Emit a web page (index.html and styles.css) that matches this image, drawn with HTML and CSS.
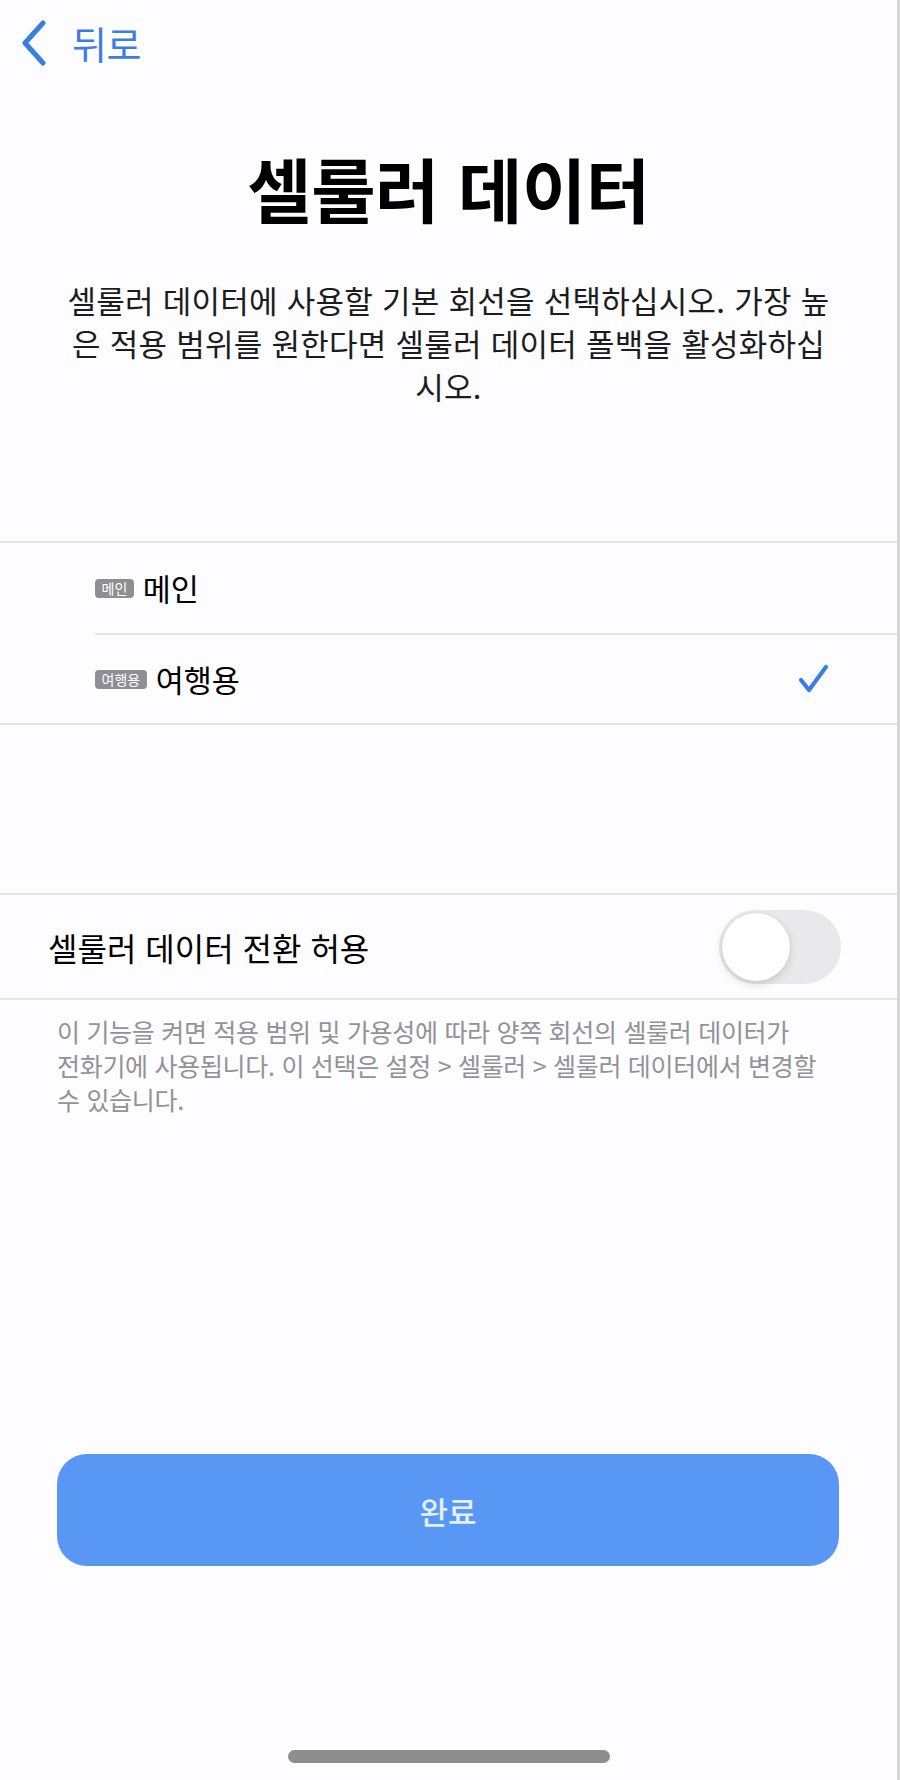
FILE: index.html
```html
<!DOCTYPE html>
<html lang="ko">
<head>
<meta charset="utf-8">
<title>셀룰러 데이터</title>
<link rel="stylesheet" href="styles.css">
</head>
<body>
<div class="screen">
  <nav class="nav">
    <a class="back" href="#">
      <svg class="chev" width="28" height="46" viewBox="0 0 28 46"><path d="M23 3 L5 23 L23 43" fill="none" stroke="currentColor" stroke-width="5" stroke-linecap="round" stroke-linejoin="round"/></svg>
      <span class="back-label">뒤로</span>
    </a>
  </nav>

  <h1 class="title">셀룰러 데이터</h1>
  <p class="desc">셀룰러 데이터에 사용할 기본 회선을 선택하십시오. 가장 높<br>은 적용 범위를 원한다면 셀룰러 데이터 폴백을 활성화하십<br>시오.</p>

  <ul class="group lines">
    <li class="row">
      <span class="badge">메인</span><span class="row-label">메인</span>
    </li>
    <li class="row">
      <span class="badge">여행용</span><span class="row-label">여행용</span>
      <svg class="check" width="36" height="32" viewBox="0 0 36 32"><path d="M4 17 L12 27 L29 4" fill="none" stroke="currentColor" stroke-width="4.2" stroke-linecap="round" stroke-linejoin="round"/></svg>
    </li>
  </ul>

  <div class="group switch-group">
    <div class="switch-row">
      <span class="switch-label">셀룰러 데이터 전환 허용</span>
      <span class="toggle"><span class="knob"></span></span>
    </div>
  </div>
  <p class="note">이 기능을 켜면 적용 범위 및 가용성에 따라 양쪽 회선의 셀룰러 데이터가<br>전화기에 사용됩니다. 이 선택은 설정 &gt; 셀룰러 &gt; 셀룰러 데이터에서 변경할<br>수 있습니다.</p>

  <div class="spacer"></div>
  <div class="actions">
    <button class="done" type="button">완료</button>
  </div>
  <div class="home-bar"><span class="home-ind"></span></div>
</div>
</body>
</html>
```

FILE: styles.css
```css
* { box-sizing: border-box; }
html, body {
  margin: 0;
  padding: 0;
  background: #fdfcfe;
}
body {
  font-family: "Noto Sans CJK KR", "Noto Sans", sans-serif;
  color: #000;
}
.screen {
  width: 900px;
  height: 1780px;
  display: flex;
  flex-direction: column;
  border-right: 3px solid #d6d6d8;
  overflow: hidden;
}
.nav {
  height: 86px;
  padding: 20px 0 0 20px;
}
.back {
  display: inline-flex;
  align-items: center;
  gap: 24px;
  color: #3a7ee4;
  text-decoration: none;
}
.chev { display: block; }
.back-label {
  font-size: 38px;
  line-height: 46px;
  letter-spacing: -0.5px;
}
.title {
  margin: 56px 0 0;
  text-align: center;
  font-size: 70px;
  line-height: 92px;
  font-weight: 700;
  letter-spacing: -0.5px;
}
.desc {
  margin: 44px 0 0;
  text-align: center;
  font-size: 31px;
  line-height: 43px;
  letter-spacing: 0.25px;
  color: #1c1c1e;
  white-space: nowrap;
}
.group {
  margin: 0;
  padding: 0;
  list-style: none;
  border-top: 2px solid #e6e6e9;
  border-bottom: 2px solid #e6e6e9;
}
.lines {
  margin-top: 134px;
}
.row {
  height: 90px;
  margin-left: 95px;
  padding-right: 64px;
  display: flex;
  align-items: center;
}
.row + .row {
  border-top: 2px solid #e6e6e9;
}
.badge {
  display: inline-block;
  background: #8e8e93;
  color: #fff;
  font-size: 14px;
  line-height: 19px;
  height: 19px;
  padding: 0 6.5px;
  border-radius: 4px;
  margin-right: 9px;
}
.row-label {
  font-size: 30.5px;
  line-height: 40px;
}
.check {
  margin-left: auto;
  color: #3a7ee4;
}
.switch-group {
  margin-top: 168px;
}
.switch-row {
  height: 103px;
  padding: 0 56px 0 48px;
  display: flex;
  align-items: center;
  justify-content: space-between;
}
.switch-label {
  font-size: 32px;
}
.toggle {
  position: relative;
  width: 122px;
  height: 74px;
  border-radius: 37px;
  background: #e9e9ec;
}
.knob {
  position: absolute;
  left: 3px;
  top: 3px;
  width: 68px;
  height: 68px;
  border-radius: 50%;
  background: #fff;
  box-shadow: 0 3px 8px rgba(0,0,0,0.15), 0 0 1px rgba(0,0,0,0.1);
}
.note {
  margin: 14px 0 0;
  padding-left: 57px;
  font-size: 25px;
  line-height: 34px;
  color: #929297;
  letter-spacing: -0.3px;
  white-space: nowrap;
}
.spacer { flex: 1; }
.actions {
  padding: 0 58px 0 57px;
}
.done {
  width: 100%;
  height: 112px;
  border: none;
  border-radius: 30px;
  background: #5898f4;
  color: #e4efff;
  font-family: inherit;
  font-size: 31px;
  font-weight: 500;
}
.home-bar {
  height: 214px;
  display: flex;
  align-items: flex-end;
  justify-content: center;
  padding-bottom: 17px;
}
.home-ind {
  width: 322px;
  height: 13px;
  border-radius: 7px;
  background: #8e8e90;
}
```
